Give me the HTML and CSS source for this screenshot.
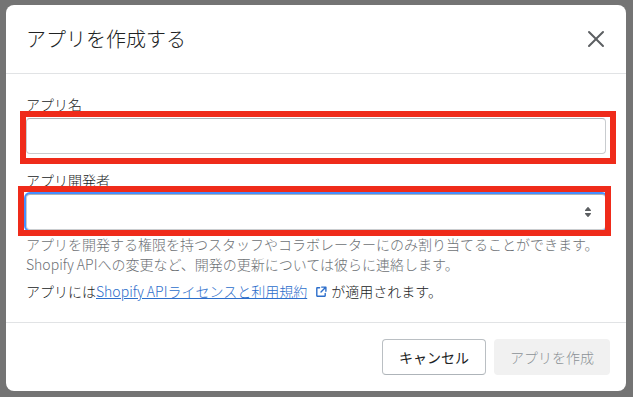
FILE: index.html
```html
<!DOCTYPE html>
<html lang="ja">
<head>
  <meta charset="UTF-8" />
  <meta name="viewport" content="width=device-width, initial-scale=1.0" />
  <title>アプリを作成する</title>
  <link rel="stylesheet" href="styles.css">
</head>
<body>
  <div class="modal">
    <div class="modal-header">
      <h2>アプリを作成する</h2>
      <button class="close" type="button" aria-label="閉じる">
        <svg viewBox="0 0 20 20" width="20" height="20">
          <path d="M11.414 10l6.293-6.293a1 1 0 1 0-1.414-1.414L10 8.586 3.707 2.293a1 1 0 0 0-1.414 1.414L8.586 10l-6.293 6.293a1 1 0 1 0 1.414 1.414L10 11.414l6.293 6.293a1 1 0 0 0 1.414-1.414L11.414 10z"/>
        </svg>
      </button>
    </div>

    <div class="modal-body">
      <div class="field">
        <label for="appName">アプリ名</label>
        <div class="control">
          <input type="text" id="appName" />
          <div class="mark mark-name"></div>
        </div>
      </div>

      <div class="field">
        <label for="developer">アプリ開発者</label>
        <div class="control">
          <select id="developer" class="focused">
            <option value=""></option>
          </select>
          <svg class="select-arrows" viewBox="0 0 20 20" width="20" height="20">
            <path d="M7.676 9h4.648c.563 0 .879-.603.53-1.014L10.531 5.24a.708.708 0 0 0-1.062 0L7.145 7.986C6.798 8.397 7.113 9 7.676 9zm4.648 2H7.676c-.563 0-.878.603-.53 1.014l2.323 2.746a.708.708 0 0 0 1.062 0l2.323-2.746c.349-.411.033-1.014-.53-1.014z"/>
          </svg>
          <div class="mark mark-dev"></div>
        </div>
        <p class="help">アプリを開発する権限を持つスタッフやコラボレーターにのみ割り当てることができます。<br>Shopify APIへの変更など、開発の更新については彼らに連絡します。</p>
      </div>

      <p class="terms">アプリには<a href="#">Shopify APIライセンスと利用規約</a>
        <svg class="ext" viewBox="0 0 20 20" width="14" height="14">
          <path d="M11 4a1 1 0 1 1 0-2h6a1 1 0 0 1 1 1v6a1 1 0 1 1-2 0V5.414l-5.293 5.293a1 1 0 0 1-1.414-1.414L14.586 4H11zM3 4.5A1.5 1.5 0 0 1 4.5 3H8a1 1 0 0 1 0 2H5v10h10v-3a1 1 0 1 1 2 0v3.5a1.5 1.5 0 0 1-1.5 1.5h-11A1.5 1.5 0 0 1 3 15.5v-11z"/>
        </svg>が適用されます。</p>
    </div>

    <div class="modal-footer">
      <button type="button" class="btn btn-cancel">キャンセル</button>
      <button type="button" class="btn btn-primary" disabled>アプリを作成</button>
    </div>
  </div>
</body>
</html>
```

FILE: styles.css
```css
* {
  box-sizing: border-box;
}
body {
  margin: 0;
  height: 397px;
  overflow: hidden;
  background: #747474;
  font-family: "Noto Sans CJK JP", "Noto Sans", sans-serif;
  font-weight: 300;
  color: #202223;
  padding: 5px 7px 0 6px;
}
.modal {
  background: #fff;
  border-radius: 8px;
  width: 620px;
  height: 386px;
  display: flex;
  flex-direction: column;
  overflow: hidden;
}
.modal-header {
  height: 69px;
  display: flex;
  align-items: center;
  justify-content: space-between;
  padding: 0 20px;
  border-bottom: 1px solid #e1e3e5;
}
.modal-header h2 {
  margin: 0;
  font-size: 20px;
  font-weight: 300;
  line-height: 28px;
}
.close {
  border: none;
  background: none;
  padding: 0;
  width: 20px;
  height: 20px;
  cursor: pointer;
}
.close svg {
  display: block;
  fill: #5c5f62;
}
.modal-body {
  padding: 20px 20px 0;
  height: 249px;
  border-bottom: 1px solid #e1e3e5;
}
.field {
  margin-bottom: 16px;
}
.field label {
  display: block;
  font-size: 14px;
  line-height: 20px;
  margin-bottom: 4px;
}
.control {
  position: relative;
}
input,
select {
  display: block;
  width: 100%;
  height: 36px;
  border: 1px solid #c9cccf;
  border-top-color: #aeb4b9;
  border-radius: 4px;
  background: #fff;
  font: inherit;
  font-size: 14px;
  padding: 0 12px;
  appearance: none;
  -webkit-appearance: none;
  outline: none;
}
select.focused {
  box-shadow: 0 0 0 2px #458fff;
}
.select-arrows {
  position: absolute;
  right: 8px;
  top: 8px;
  fill: #5c5f62;
  pointer-events: none;
}
/* red annotation frames */
.mark {
  position: absolute;
  border: 6px solid #ef2b1a;
  pointer-events: none;
}
.mark-name {
  left: -6px;
  top: -7px;
  right: -10px;
  bottom: -10px;
}
.mark-dev {
  left: -8px;
  top: -8px;
  right: -5px;
  bottom: -6px;
}
.help {
  margin: 4px 0 0;
  font-size: 14px;
  line-height: 20px;
  color: #6d7175;
}
.terms {
  margin: -9px 0 0;
  font-size: 14px;
  line-height: 20px;
}
.terms a {
  color: #2c6ecb;
  text-decoration: underline;
}
.ext {
  fill: #2c6ecb;
  vertical-align: -2px;
  margin: 0 3px 0 4px;
}
.modal-footer {
  display: flex;
  justify-content: flex-end;
  gap: 8px;
  padding: 16px 16px 0;
}
.btn {
  height: 36px;
  padding: 0;
  border: 1px solid #babfc3;
  border-bottom-color: #aeb4b9;
  border-radius: 4px;
  background: #fff;
  color: #202223;
  font: inherit;
  font-size: 14px;
  font-weight: 400;
}
.btn-cancel {
  width: 104px;
}
.btn-primary:disabled {
  width: 116px;
  border-color: transparent;
  background: #f1f1f1;
  color: #8c9196;
  font-weight: 300;
}
```
